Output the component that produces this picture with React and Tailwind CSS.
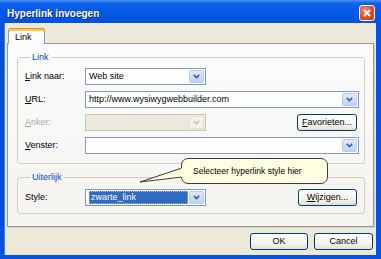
import React from "react";

const Arrow = ({ disabled }) => (
  <span
    className={
      disabled
        ? "flex h-full w-[15px] items-center justify-center rounded-[2px] border border-[#e2dfd2] bg-[#f3f1e8]"
        : "flex h-full w-[15px] items-center justify-center rounded-[2px] border border-[#b7cbf8] bg-[linear-gradient(to_bottom,#e0e9fe,#bdd0fa)]"
    }
  >
    <svg width="7" height="5" viewBox="0 0 7 5">
      <polyline
        points="0.8,0.8 3.5,3.6 6.2,0.8"
        fill="none"
        stroke={disabled ? "#c9c7ba" : "#4d6185"}
        strokeWidth="1.7"
      />
    </svg>
  </span>
);

const Combo = ({ children, width, disabled }) => (
  <div
    className={
      disabled
        ? `flex h-[17px] items-stretch border border-[#c9c7ba] bg-[#ebe9dd] p-px ${width}`
        : `flex h-[17px] items-stretch border border-[#7f9db9] bg-white p-px ${width}`
    }
  >
    <div className="flex min-w-0 flex-1 items-center pl-[2px] pr-px">{children}</div>
    <Arrow disabled={disabled} />
  </div>
);

const XpButton = ({ children, width }) => (
  <button
    className={`flex h-[17px] items-center justify-center rounded-[3px] border border-[#003c74] bg-[linear-gradient(to_bottom,#ffffff,#f5f4ef_65%,#e2ded2)] leading-none text-black ${width}`}
  >
    {children}
  </button>
);

const Row = ({ label, disabled, children }) => (
  <div className="flex h-[17px] items-center">
    <span className={disabled ? "w-[60px] text-[#aca899]" : "w-[60px]"}>{label}</span>
    {children}
  </div>
);

export default function App() {
  return (
    <div className="relative flex h-[259px] w-[381px] flex-col overflow-hidden bg-[#0651dd] font-['Liberation_Sans',Arial,sans-serif] text-[9px] leading-[11px] text-black">
      {/* Title bar */}
      <div className="flex h-[23px] shrink-0 items-center justify-between bg-[linear-gradient(to_bottom,#4a93f7_0%,#0d62ea_14%,#0458e6_50%,#0454e0_85%,#0651dd_100%)] pl-[7px] pr-[6px] pt-[3px]">
        <span className="text-[10px] font-bold text-white [text-shadow:1px_1px_#0b2c8c]">
          Hyperlink invoegen
        </span>
        <div className="flex h-[16px] w-[16px] items-center justify-center rounded-[3px] border border-white bg-[radial-gradient(circle_at_35%_30%,#f0866a,#dc4d25_55%,#c23a14)]">
          <svg width="8" height="8" viewBox="0 0 8 8">
            <path d="M1 1 L7 7 M7 1 L1 7" stroke="white" strokeWidth="1.8" />
          </svg>
        </div>
      </div>

      {/* Client area */}
      <div className="mb-[4px] ml-[4px] mr-[5px] flex flex-1 flex-col border-l border-[#3a82f2] bg-[#ece9d8] pt-[6px] pb-[5px]">
        {/* Tab */}
        <div className="relative z-10 -mb-px ml-[3px] flex h-[15px] w-[37px] items-center rounded-t-[3px] border-x border-t-2 border-x-[#919b9c] border-t-[#ffc83c] bg-[#fcfcfe] pl-[6px] shadow-[0_-1px_0_#e68b2c]">
          Link
        </div>

        {/* Tab panel */}
        <div className="mx-[2px] flex h-[184px] flex-col border border-[#919b9c] bg-[linear-gradient(to_bottom,#fcfcfe,#f4f3ee)] pl-[9px] pr-[8px] pt-[7px] shadow-[1px_1px_0_#d0cebf]">
          <fieldset className="rounded-[3px] border border-[#d0d0bf] pb-[9px] pl-[7px] pr-[5px] pt-[5px]">
            <legend className="ml-[5px] px-[2px] leading-[12px] text-[#0046d5]">Link</legend>
            <div className="flex flex-col gap-[6px]">
              <Row label={<><u>L</u>ink naar:</>}>
                <Combo width="w-[121px]">Web site</Combo>
              </Row>
              <Row label={<><u>U</u>RL:</>}>
                <Combo width="flex-1">http://www.wysiwygwebbuilder.com</Combo>
              </Row>
              <Row label={<><u>A</u>nker:</>} disabled>
                <Combo width="w-[121px]" disabled />
                <div className="flex-1" />
                <XpButton width="mr-[2px] w-[60px]">
                  <span><u>F</u>avorieten...</span>
                </XpButton>
              </Row>
              <Row label={<><u>V</u>enster:</>}>
                <Combo width="flex-1" />
              </Row>
            </div>
          </fieldset>

          <fieldset className="mt-[7px] rounded-[3px] border border-[#d0d0bf] pb-[7px] pl-[7px] pr-[5px] pt-[6px]">
            <legend className="ml-[5px] px-[2px] leading-[12px] text-[#0046d5]">Uiterlijk</legend>
            <Row label="Style:">
              <Combo width="w-[121px]">
                <span className="flex h-full flex-1 items-center border border-dotted border-[#a9bde6] bg-[#316ac5] pl-px text-white">
                  zwarte_link
                </span>
              </Combo>
              <div className="flex-1" />
              <XpButton width="mr-[2px] w-[59px]">
                <span><u>W</u>ijzigen...</span>
              </XpButton>
            </Row>
          </fieldset>
        </div>

        {/* Dialog buttons */}
        <div className="mr-[3px] mt-[6px] flex justify-end gap-[6px]">
          <XpButton width="w-[58px]">OK</XpButton>
          <XpButton width="w-[59px]">Cancel</XpButton>
        </div>
      </div>

      {/* Balloon tooltip */}
      <svg className="absolute left-[138px] top-[164px]" width="50" height="22" viewBox="0 0 50 22">
        <polygon points="2,18 44,3 47,3 47,14 44,14" fill="#ffffe1" />
        <path d="M44,4 L2,18 L44,13" fill="none" stroke="#3b3b3b" strokeWidth="1" />
      </svg>
      <div className="absolute left-[181px] top-[158px] flex h-[26px] w-[147px] items-center rounded-[7px] border border-[#3b3b3b] bg-[#ffffe1] pl-[11px] text-[8.5px]">
        Selecteer hyperlink style hier
      </div>
      <svg className="absolute left-[178px] top-[167px]" width="8" height="12" viewBox="0 0 8 12">
        <rect x="3" y="1" width="5" height="9" fill="#ffffe1" />
      </svg>
    </div>
  );
}
